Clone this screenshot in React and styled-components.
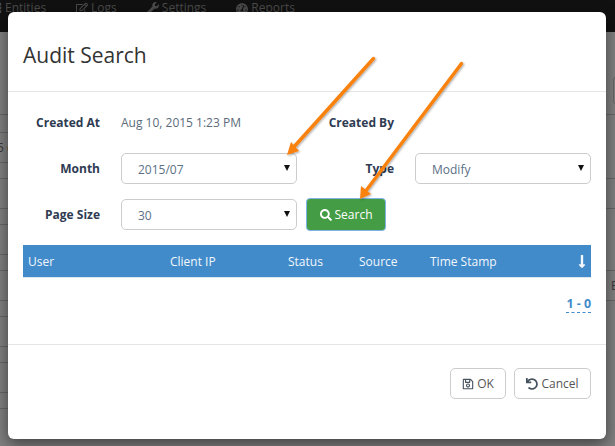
import React from "react";
import styled, { createGlobalStyle } from "styled-components";
import { FaDatabase, FaRegEdit, FaWrench, FaTachometerAlt, FaSearch, FaRegSave, FaUndo, FaLongArrowAltDown } from "react-icons/fa";

const Global = createGlobalStyle`
  html, body { margin: 0; padding: 0; width: 615px; height: 446px; overflow: hidden; background: #808080; }
  body { font-family: "Open Sans", "Liberation Sans", sans-serif; font-size: 12px; }
  * { box-sizing: border-box; }
`;

const Page = styled.div`
  position: relative;
  width: 615px;
  height: 446px;
  overflow: hidden;
  background: #808080;
`;
const Nav = styled.nav`
  height: 32px;
  padding-top: 1px;
  background: #111;
  color: #4b4b4b;
  font-size: 12px;
  line-height: 14px;
  overflow: hidden;
`;
const NavList = styled.div`
  display: flex;
  gap: 30px;
  margin-left: -10px;
`;
const NavItem = styled.span`
  display: flex;
  align-items: center;
  gap: 3px;
  height: 14px;
  svg { width: 12px; height: 12px; }
`;
const BackRows = styled.div`
  display: flex;
  justify-content: space-between;
`;
const BackCol = styled.div`
  width: 12px;
  overflow: hidden;
`;
const BackRow = styled.div`
  height: ${p => p.$h}px;
  border-bottom: 1px solid #676767;
  color: #3a3a3a;
  font-size: 12px;
  line-height: ${p => p.$h}px;
  text-indent: ${p => p.$indent || 0}px;
  white-space: nowrap;
  overflow: hidden;
`;
const BackEdge = styled.div`
  width: 20px;
  height: 29px;
  margin: 44px 0 0 10px;
  border: 1px solid #666;
  border-radius: 4px;
`;
const Modal = styled.div`
  position: absolute;
  left: 8px;
  top: 12px;
  width: 598px;
  height: 427px;
  display: flex;
  flex-direction: column;
  background: #fff;
  border-radius: 6px;
  box-shadow: 0 5px 15px rgba(0,0,0,.5);
`;
const Header = styled.header`
  height: 80px;
  padding: 27px 15px 0;
  border-bottom: 1px solid #e5e5e5;
`;
const Title = styled.h4`
  margin: 0;
  font-size: 21px;
  font-weight: 400;
  line-height: 33px;
  color: #333;
`;
const Body = styled.div`
  flex: 1;
  padding: 15px 15px 0;
  display: flex;
  flex-direction: column;
  gap: 15px;
`;
const FormGrid = styled.div`
  display: grid;
  grid-template-columns: 98px 176px 118px 176px;
  grid-auto-rows: 31px;
  row-gap: 15px;
  align-items: center;
`;
const Label = styled.label`
  padding-right: 21px;
  text-align: right;
  font-weight: 700;
  color: #2e3b52;
  font-size: 12px;
`;
const Value = styled.span`
  color: #5b6b7c;
  font-size: 12px;
`;
const SelectWrap = styled.div`
  position: relative;
  height: 31px;
  &::after {
    content: "";
    position: absolute;
    right: 7px;
    top: 12px;
    border-left: 3.5px solid transparent;
    border-right: 3.5px solid transparent;
    border-top: 6px solid #111;
    pointer-events: none;
  }
`;
const Select = styled.select`
  display: block;
  width: 100%;
  height: 31px;
  padding: 1px 16px 0;
  appearance: none;
  background: #fff;
  border: 1px solid #ccc;
  border-radius: 5px;
  color: #5b6f86;
  font: 400 12px "Open Sans", sans-serif;
`;
const SearchButton = styled.button`
  display: flex;
  align-items: center;
  justify-content: center;
  gap: 3px;
  width: 80px;
  height: 33px;
  margin-left: 9px;
  padding: 0;
  background: #449d44;
  border: 1px solid #7fb2e8;
  border-radius: 4px;
  color: #fff;
  font: 400 12px "Open Sans", sans-serif;
  svg { width: 12px; height: 12px; }
`;
const Results = styled.div`
  display: flex;
  flex-direction: column;
`;
const TableHead = styled.div`
  display: grid;
  grid-template-columns: 142px 118px 71px 71px 1fr 20px;
  align-items: center;
  height: 33px;
  padding-left: 5px;
  background: #428bca;
  border-bottom: 1px solid #dce6ef;
  color: #f2f7fc;
  font-size: 12px;
  svg { width: 10px; height: 15px; justify-self: end; margin-right: 4px; }
`;
const Pager = styled.div`
  align-self: flex-end;
  margin-top: 18px;
  border-bottom: 1px dashed #428bca;
  color: #428bca;
  font-weight: 700;
  font-size: 12.4px;
  line-height: 16px;
`;
const Footer = styled.footer`
  display: flex;
  justify-content: flex-end;
  gap: 8px;
  height: 95px;
  padding: 23px 15px 0;
  border-top: 1px solid #e5e5e5;
`;
const FootButton = styled.button`
  display: flex;
  align-items: center;
  justify-content: center;
  gap: 3px;
  width: ${p => p.$w}px;
  height: 31px;
  padding: 0;
  background: #fff;
  border: 1px solid #ccc;
  border-radius: 5px;
  color: #555;
  font: 400 12px "Open Sans", sans-serif;
  svg { width: 12px; height: 12px; color: #46535f; }
`;
const Arrows = styled.svg`
  position: absolute;
  left: 0;
  top: 0;
  pointer-events: none;
`;

const Arrow = ({ d, head }) => (
  <g>
    <path d={d} fill="none" stroke="#f8820f" strokeWidth="3.4" strokeLinecap="round" />
    <polygon points={head} fill="#f8820f" />
  </g>
);

export default function App() {
  return (
    <Page>
      <Global />
      <Nav>
        <NavList>
          <NavItem><FaDatabase />Entities</NavItem>
          <NavItem><FaRegEdit />Logs</NavItem>
          <NavItem><FaWrench />Settings</NavItem>
          <NavItem><FaTachometerAlt />Reports</NavItem>
        </NavList>
      </Nav>
      <BackRows>
        <BackCol>
          <BackRow $h={83} />
          <BackRow $h={18} />
          <BackRow $h={30} $indent={-3}>5 c</BackRow>
          <BackRow $h={16} />
          <BackRow $h={30} />
          <BackRow $h={16} />
          <BackRow $h={30} />
          <BackRow $h={16} />
          <BackRow $h={30} />
          <BackRow $h={16} />
          <BackRow $h={30} />
          <BackRow $h={16} />
          <BackRow $h={30} />
          <BackRow $h={16} />
        </BackCol>
        <BackCol>
          <BackRow $h={83}><BackEdge /></BackRow>
          <BackRow $h={64} />
          <BackRow $h={30} />
          <BackRow $h={62} />
          <BackRow $h={30} $indent={8}>E</BackRow>
        </BackCol>
      </BackRows>
      <Modal>
        <Header><Title>Audit Search</Title></Header>
        <Body>
          <FormGrid>
            <Label>Created At</Label>
            <Value>Aug 10, 2015 1:23 PM</Value>
            <Label>Created By</Label>
            <span />
            <Label>Month</Label>
            <SelectWrap>
              <Select defaultValue="2015/07"><option>2015/07</option></Select>
            </SelectWrap>
            <Label>Type</Label>
            <SelectWrap>
              <Select defaultValue="Modify"><option>Modify</option></Select>
            </SelectWrap>
            <Label>Page Size</Label>
            <SelectWrap>
              <Select defaultValue="30"><option>30</option></Select>
            </SelectWrap>
            <SearchButton><FaSearch />Search</SearchButton>
          </FormGrid>
          <Results>
            <TableHead>
              <span>User</span>
              <span>Client IP</span>
              <span>Status</span>
              <span>Source</span>
              <span>Time Stamp</span>
              <FaLongArrowAltDown />
            </TableHead>
            <Pager>1 - 0</Pager>
          </Results>
        </Body>
        <Footer>
          <FootButton $w={56}><FaRegSave />OK</FootButton>
          <FootButton $w={77}><FaUndo />Cancel</FootButton>
        </Footer>
      </Modal>
      <Arrows width="615" height="446" viewBox="0 0 615 446">
        <defs>
          <filter id="arrowShadow" x="-20%" y="-20%" width="140%" height="140%">
            <feDropShadow dx="1" dy="1" stdDeviation="1" floodColor="#000" floodOpacity="0.35" />
          </filter>
        </defs>
        <g filter="url(#arrowShadow)">
          <Arrow d="M373.5 58.5 L292 149" head="287,155 299,151 291,142" />
          <Arrow d="M461.5 63.5 L365 192" head="360,199 371,194 361,186" />
        </g>
      </Arrows>
    </Page>
  );
}
